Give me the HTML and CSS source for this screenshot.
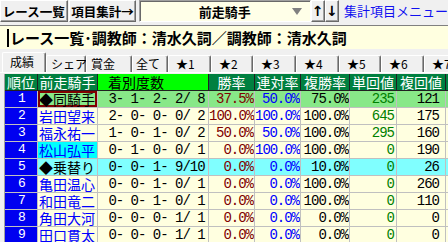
FILE: index.html
```html
<!DOCTYPE html>
<html lang="ja">
<head>
    <meta charset="UTF-8">
    <title>集計</title>
    <link rel="stylesheet" href="styles.css">
</head>
<body>
    <div class="toolbar">
        <div class="btn btn-wide">レース一覧</div>
        <div class="btn btn-wide">項目集計→</div>
        <div class="combo">
            <span class="combo-text">前走騎手</span>
            <span class="combo-arrow"></span>
        </div>
        <div class="btn btn-arrow">↑</div>
        <div class="btn btn-arrow">↓</div>
        <span class="menu-link">集計項目メニュー</span>
    </div>

    <div class="title"><span class="caret"></span>レース一覧･調教師：清水久詞／調教師：清水久詞</div>

    <div class="tabs">
        <div class="tab active tab-result">成績</div>
        <div class="tab tab-share">シェア</div>
        <div class="tab tab-prize">賞金</div>
        <div class="tab tab-all">全て</div>
        <div class="tab">★1</div>
        <div class="tab narrow">★2</div>
        <div class="tab">★3</div>
        <div class="tab">★4</div>
        <div class="tab narrow">★5</div>
        <div class="tab">★6</div>
        <div class="tab">★7</div>
    </div>

    <div class="sheet">
        <div class="row head">
            <span>順位</span><span>前走騎手</span><span class="count">着別度数</span><span>勝率</span><span>連対率</span><span>複勝率</span><span>単回値</span><span>複回値</span><span>単勝</span>
        </div>
        <div class="row same">
            <span class="no">1</span><span class="name plain focus">◆同騎手</span><span class="count"> 3- 1- 2- 2/ 8</span><span class="num win">37.5%</span><span class="num ren">50.0%</span><span class="num fuku">75.0%</span><span class="num tan">235</span><span class="num fk">121</span><span></span>
        </div>
        <div class="row">
            <span class="no">2</span><span class="name">岩田望来</span><span class="count"> 2- 0- 0- 0/ 2</span><span class="num win">100.0%</span><span class="num ren">100.0%</span><span class="num fuku">100.0%</span><span class="num tan">645</span><span class="num fk">175</span><span></span>
        </div>
        <div class="row">
            <span class="no">3</span><span class="name">福永祐一</span><span class="count"> 1- 0- 1- 0/ 2</span><span class="num win">50.0%</span><span class="num ren">50.0%</span><span class="num fuku">100.0%</span><span class="num tan">295</span><span class="num fk">160</span><span></span>
        </div>
        <div class="row">
            <span class="no">4</span><span class="name mark">松山弘平</span><span class="count"> 0- 1- 0- 0/ 1</span><span class="num win">0.0%</span><span class="num ren">100.0%</span><span class="num fuku">100.0%</span><span class="num tan">0</span><span class="num fk">190</span><span></span>
        </div>
        <div class="row change">
            <span class="no">5</span><span class="name plain">◆乗替り</span><span class="count"> 0- 0- 1- 9/10</span><span class="num win">0.0%</span><span class="num ren">0.0%</span><span class="num fuku">10.0%</span><span class="num tan">0</span><span class="num fk">26</span><span></span>
        </div>
        <div class="row">
            <span class="no">6</span><span class="name">亀田温心</span><span class="count"> 0- 0- 1- 0/ 1</span><span class="num win">0.0%</span><span class="num ren">0.0%</span><span class="num fuku">100.0%</span><span class="num tan">0</span><span class="num fk">260</span><span></span>
        </div>
        <div class="row">
            <span class="no">7</span><span class="name">和田竜二</span><span class="count"> 0- 0- 1- 0/ 1</span><span class="num win">0.0%</span><span class="num ren">0.0%</span><span class="num fuku">100.0%</span><span class="num tan">0</span><span class="num fk">110</span><span></span>
        </div>
        <div class="row">
            <span class="no">8</span><span class="name">角田大河</span><span class="count"> 0- 0- 0- 1/ 1</span><span class="num win">0.0%</span><span class="num ren">0.0%</span><span class="num fuku">0.0%</span><span class="num tan">0</span><span class="num fk">0</span><span></span>
        </div>
        <div class="row">
            <span class="no">9</span><span class="name">田口貫太</span><span class="count"> 0- 0- 0- 1/ 1</span><span class="num win">0.0%</span><span class="num ren">0.0%</span><span class="num fuku">0.0%</span><span class="num tan">0</span><span class="num fk">0</span><span></span>
        </div>
    </div>
</body>
</html>
```

FILE: styles.css
```css
body {
    margin: 0;
    width: 448px;
    height: 242px;
    overflow: hidden;
    background: #f0f0f0;
    color: #000;
    font-family: "Noto Sans CJK JP", sans-serif;
}

/* top toolbar */
.toolbar {
    display: flex;
    align-items: flex-start;
    height: 23px;
    white-space: nowrap;
    overflow: hidden;
}
.btn {
    box-sizing: border-box;
    height: 22px;
    display: flex;
    align-items: center;
    justify-content: center;
    background: #f0f0f0;
    border: 1px solid;
    border-color: #fff #696969 #696969 #fff;
    box-shadow: inset -1px -1px #a0a0a0;
    font-size: 12.5px;
    font-weight: bold;
}
.btn-wide {
    width: 77px;
    margin-right: 1px;
}
.btn-arrow {
    width: 16px;
    font-family: "DejaVu Sans", sans-serif;
    font-size: 14px;
}
.combo {
    box-sizing: border-box;
    width: 193px;
    height: 22px;
    margin: 0 0 0 2px;
    padding-left: 18px;
    display: flex;
    align-items: center;
    background: #ffffe8;
    border: 1px solid;
    border-color: #a0a0a0 #fff #fff #a0a0a0;
    box-shadow: inset 1px 1px #696969;
}
.combo-text {
    flex: 1;
    text-align: center;
    font-size: 13px;
    font-weight: bold;
}
.combo-arrow {
    width: 0;
    height: 0;
    margin-right: 8px;
    border-left: 5px solid transparent;
    border-right: 5px solid transparent;
    border-top: 7px solid #808080;
}
.menu-link {
    margin-left: 5px;
    line-height: 22px;
    font-size: 13px;
    color: #1010f0;
}

/* title edit box */
.title {
    box-sizing: border-box;
    height: 24px;
    margin-top: 2px;
    padding-left: 7px;
    display: flex;
    align-items: center;
    background: #ffffe0;
    border-top: 1px solid #808080;
    font-size: 15px;
    font-weight: bold;
    white-space: nowrap;
    overflow: hidden;
}
.caret {
    width: 2px;
    height: 18px;
    margin-right: 1px;
    background: #000;
}

/* tab strip */
.tabs {
    box-sizing: border-box;
    height: 24px;
    padding-left: 2px;
    display: flex;
    align-items: flex-end;
    border-bottom: 1px solid #fff;
    white-space: nowrap;
    overflow: hidden;
}
.tab {
    box-sizing: border-box;
    flex: none;
    width: 43px;
    height: 17px;
    padding-left: 7px;
    background: #f0f0f0;
    border: 1px solid;
    border-color: #fff #696969 transparent #fff;
    border-bottom: none;
    border-radius: 2px 2px 0 0;
    box-shadow: inset -1px 0 #a0a0a0;
    font-size: 12px;
    line-height: 15px;
}
.tab.narrow { width: 42px; }
.tab-result { width: 44px; }
.tab-share { width: 40px; padding-left: 4px; }
.tab-prize { width: 46px; padding-left: 4px; }
.tab-all { width: 36px; padding-left: 3px; }
.tab.active {
    height: 21px;
    margin-bottom: -1px;
    padding-top: 1px;
}

/* result sheet */
.sheet {
    margin: 1px 0 0 4px;
    border-left: 1px solid #a0a0a0;
}
.row {
    display: grid;
    grid-template-columns: 33px 60px 111px 46px 46px 49px 47px 49px 60px;
    height: 17px;
}
.row > span {
    box-sizing: border-box;
    height: 17px;
    background: #ffffe0;
    border-right: 1px solid #c0c0c0;
    border-bottom: 1px solid #c0c0c0;
    font-size: 14px;
    line-height: 16px;
    white-space: pre;
    overflow: hidden;
}
.row.head > span {
    background: #008040;
    color: #fff;
    text-align: center;
    border-color: #202020;
}
.row.head > span.count {
    background: #00ff00;
    color: #000;
    text-align: left;
    padding-left: 10px;
    font-family: "Noto Sans CJK JP", sans-serif;
    font-size: 14px;
    letter-spacing: 0;
}
.row.same > span { background: #88e888; }
.row.change > span { background: #80ffff; }

.row > span.no {
    background: #0000f0;
    color: #fff;
    padding-left: 13px;
    font-family: "Liberation Mono", monospace;
    font-size: 13px;
}
.name {
    padding-left: 1px;
    color: #0000ff;
}
.name.plain { color: #000; }
.row > span.mark { background: #00ffff; }
.focus { box-shadow: inset 0 0 0 2px #800000; }

.count,
.num {
    font-family: "Liberation Mono", monospace;
    font-size: 13px;
    letter-spacing: -1px;
}
.count { padding-left: 3px; }
.num {
    text-align: right;
    padding-right: 1px;
}
.win { color: #800000; }
.ren { color: #0000ff; }
.tan { color: #008000; padding-right: 2px; }
.num.fk { padding-right: 6px; }
```
